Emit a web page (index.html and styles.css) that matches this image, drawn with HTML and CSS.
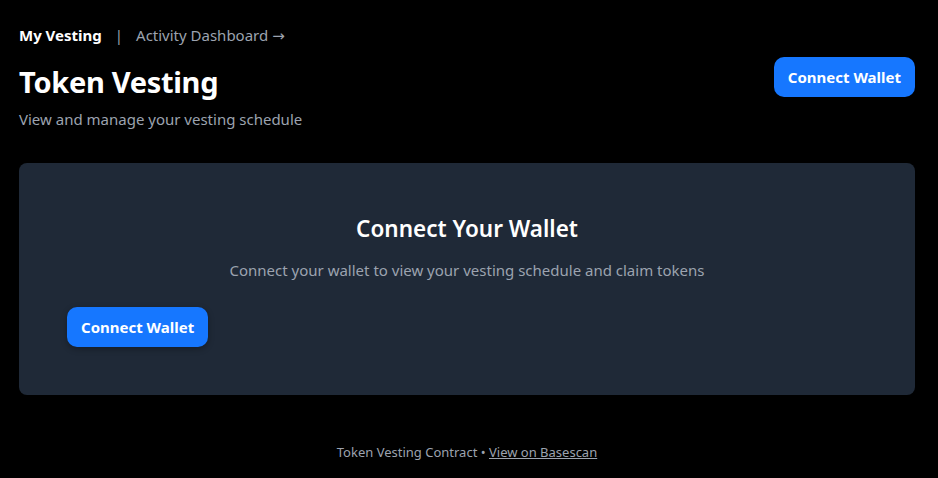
FILE: index.html
```html
<!DOCTYPE html>
<html>
<head>
<meta charset="utf-8">
<link rel="stylesheet" href="styles.css">
</head>
<body>
<div class="page">
  <nav class="nav">
    <span class="nav-active">My Vesting</span>
    <span class="nav-sep">|</span>
    <a class="nav-link">Activity Dashboard <span class="arrow">→</span></a>
  </nav>
  <header class="header">
    <div class="titles">
      <h1 class="title">Token Vesting</h1>
      <p class="subtitle">View and manage your vesting schedule</p>
    </div>
    <button class="btn">Connect Wallet</button>
  </header>
  <section class="card">
    <h2 class="card-title">Connect Your Wallet</h2>
    <p class="card-text">Connect your wallet to view your vesting schedule and claim tokens</p>
    <div class="card-actions"><button class="btn">Connect Wallet</button></div>
  </section>
  <footer class="footer">Token Vesting Contract • <a class="footer-link">View on Basescan</a></footer>
</div>
</body>
</html>
```
FILE: styles.css
```css
* { box-sizing: border-box; }
html, body { margin: 0; background: #000; }
body { font-family: "Noto Sans", "Open Sans", sans-serif; color: #fff; }
.page { padding: 23px 23px 0 19px; }
.nav { display: flex; align-items: center; font-size: 15px; height: 24px; }
.nav-active { font-weight: 700; color: #fff; }
.nav-sep { color: #9ca3af; margin: 0 13px 0 13px; }
.nav-link { color: #9ca3af; }
.arrow { font-family: "DejaVu Sans", sans-serif; font-size: 15px; }
.header { display: flex; justify-content: space-between; align-items: flex-start; margin-top: 10px; }
.titles { padding-top: 5px; }
.title { margin: 0; font-size: 29px; font-weight: 700; line-height: 40px; letter-spacing: -0.3px; }
.subtitle { margin: 6px 0 0; font-size: 15px; color: #9ca3af; line-height: 22px; }
.btn { background: #1677ff; color: #fff; border: none; border-radius: 10px; font-family: inherit; font-weight: 700; font-size: 15px; height: 40px; padding: 0 14px; }
.card { margin-top: 33px; background: #1f2937; border-radius: 8px; padding: 49px 48px 48px; }
.card-title { margin: 0; text-align: center; font-size: 22.5px; font-weight: 600; line-height: 34px; }
.card-text { margin: 12px 0 0; text-align: center; font-size: 15px; color: #9ca3af; line-height: 24px; }
.card-actions .btn { margin-top: 25px; box-shadow: 0 2px 6px rgba(0,0,0,0.3); }
.footer { text-align: center; font-size: 13px; color: #9ca3af; margin-top: 47px; line-height: 20px; }
.footer-link { text-decoration: underline; color: #9ca3af; }
```
